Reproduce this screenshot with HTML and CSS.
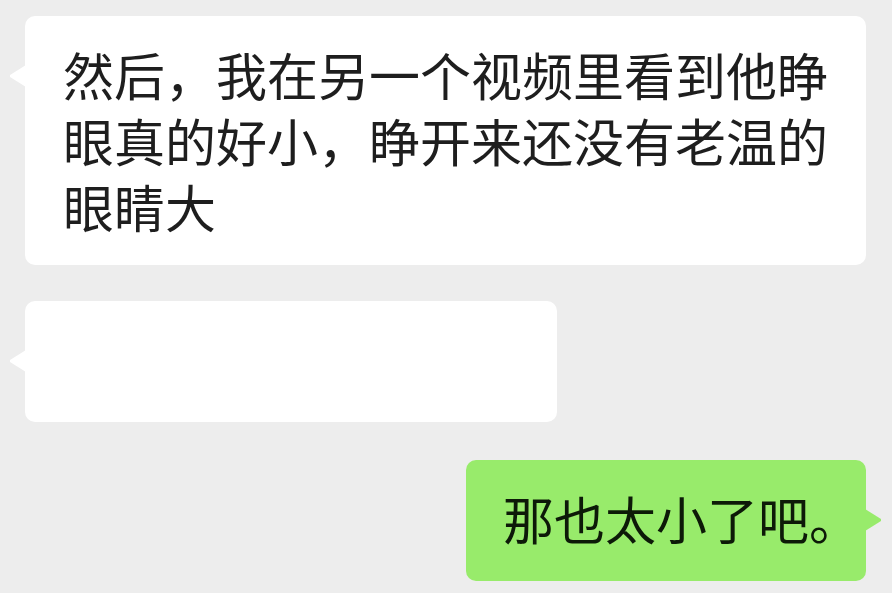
FILE: index.html
```html
<!DOCTYPE html>
<html lang="zh-CN">
<head>
<meta charset="utf-8">
<title>聊天</title>
<link rel="stylesheet" href="styles.css">
</head>
<body>
<main class="chat">
  <div class="row row-in">
    <div class="bubble bubble-in bubble-wide">然后，我在另一个视频里看到他睁眼真的好小，睁开来还没有老温的眼睛大</div>
  </div>
  <div class="row row-in">
    <div class="bubble bubble-in bubble-blank"></div>
  </div>
  <div class="row row-out">
    <div class="bubble bubble-out">那也太小了吧。</div>
  </div>
</main>
</body>
</html>
```
FILE: styles.css
```css
* { box-sizing: border-box; }

html, body {
  margin: 0;
  padding: 0;
  background: #ededed;
}

body {
  width: 892px;
  height: 593px;
  overflow: hidden;
  font-family: "Noto Sans CJK SC", "Noto Sans", sans-serif;
}

.chat {
  display: flex;
  flex-direction: column;
  gap: 36px;
  padding: 16px 26px 0 25px;
}

.row {
  display: flex;
}

.row-out {
  justify-content: flex-end;
  margin-top: 2px;
}

.bubble {
  position: relative;
  border-radius: 10px;
  font-size: 51px;
  line-height: 66px;
  color: #1e1e1e;
  padding: 25px 34px 26px 38px;
  min-height: 121px;
}

/* the little pointer on the speaker's side */
.bubble::before {
  content: "";
  position: absolute;
  top: 49px;
  width: 16px;
  height: 22px;
  background: inherit;
}

.bubble-in {
  background: #ffffff;
}

.bubble-in::before {
  left: -15px;
  clip-path: polygon(0 45%, 0 55%, 100% 100%, 100% 0);
}

.bubble-wide {
  width: 841px;
}

.bubble-blank {
  width: 532px;
}

.bubble-out {
  background: #98eb6b;
  color: #0d1a08;
  padding-left: 37px;
  padding-right: 0;
  width: 400px;
  white-space: nowrap;
}

.bubble-out::before {
  right: -15px;
  clip-path: polygon(100% 45%, 100% 55%, 0 100%, 0 0);
}
```
